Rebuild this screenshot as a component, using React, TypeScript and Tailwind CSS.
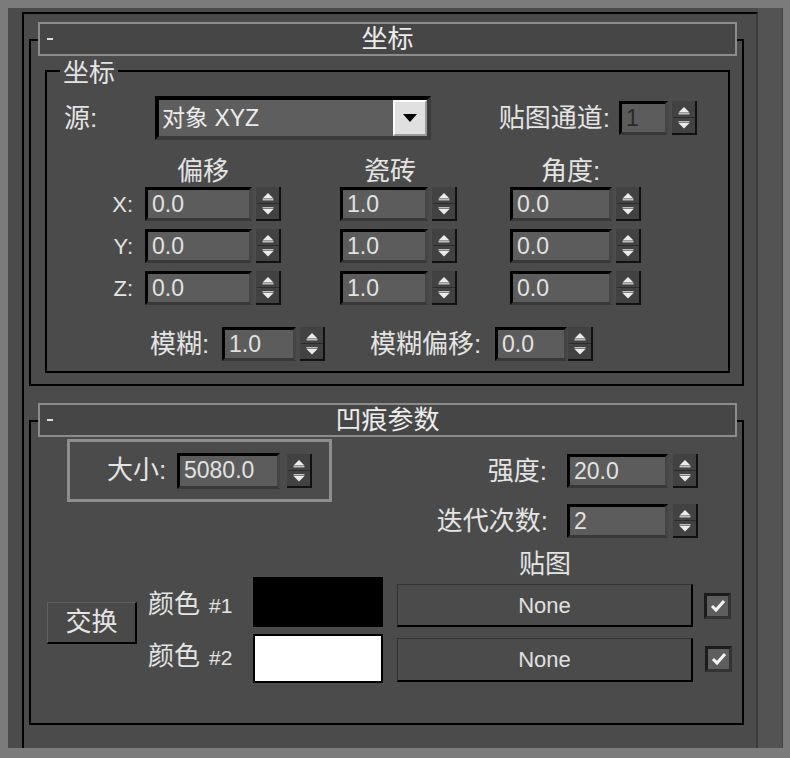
import React from "react";

// 3ds Max style rollout panel: 坐标 + 凹痕参数

const Spinner = () => (
  <svg width="25" height="34" viewBox="0 0 25 34" className="block shrink-0">
    <rect x="0" y="0" width="25" height="34" fill="#111" />
    <rect x="0" y="0" width="23" height="32" fill="#424242" />
    <line x1="1" y1="16.5" x2="23" y2="16.5" stroke="#2c2c2c" />
    <polygon points="12,6 6.5,11.5 17.5,11.5" fill="#ececec" />
    <rect x="6.5" y="12" width="11" height="1.5" fill="#bdbdbd" />
    <rect x="6.5" y="20" width="11" height="1.5" fill="#bdbdbd" />
    <polygon points="6.5,22 17.5,22 12,27.5" fill="#ececec" />
  </svg>
);

type FieldProps = {
  value: string;
  w: string;
  h?: string;
  dim?: boolean;
};

const Field = ({ value, w, h = "h-[34px]", dim = false }: FieldProps) => (
  <div
    className={`flex ${h} ${w} shrink-0 items-center border-[3px] border-t-black border-l-black border-r-[#454545] border-b-[#383838] bg-[#5c5c5c] pl-[4px] text-[23px] leading-none ${
      dim ? "text-[#2a2a2a]" : "text-[#e2e2e2]"
    }`}
  >
    {value}
  </div>
);

const SpinField = ({ value, w, dim, gap = "gap-[4px]" }: FieldProps & { gap?: string }) => (
  <div className={`flex items-center ${gap}`}>
    <Field value={value} w={w} dim={dim} />
    <Spinner />
  </div>
);

const RolloutHeader = ({ title }: { title: string }) => (
  <div className="relative z-10 ml-[9px] flex h-[34px] w-[699px] items-center border-2 border-[#8c8c8c] bg-[#464646]">
    <span className="ml-[7px] h-[2px] w-[6px] bg-[#dcdcdc]" />
    <span className="flex-1 pr-[13px] text-center text-[26px] leading-[28px] text-[#ededed]">
      {title}
    </span>
  </div>
);

const CheckBox = ({ className = "" }: { className?: string }) => (
  <div
    className={`flex h-[26px] w-[27px] items-center justify-center border-[3px] border-t-[#1c1c1c] border-l-[#1c1c1c] border-r-[#333] border-b-[#333] bg-[#5e5e5e] ${className}`}
  >
    <svg width="16" height="14" viewBox="0 0 16 14">
      <polyline points="2,7 6,11 14,2" fill="none" stroke="#f4f4f4" strokeWidth="3" />
    </svg>
  </div>
);

const MapButton = ({ className = "" }: { className?: string }) => (
  <div
    className={`flex w-[296px] items-center justify-center border border-[#333] border-r-2 border-b-2 border-r-black border-b-black bg-[#4b4b4b] text-[22px] text-[#e0e0e0] ${className}`}
  >
    None
  </div>
);

export default function App() {
  return (
    <div className="h-[758px] w-[790px] bg-[#7b7b7b] pt-[8px] pr-[7px] pb-[10px] pl-[8px] font-['Liberation_Sans','Noto_Sans_CJK_SC',sans-serif] text-[#e4e4e4]">
      <div className="flex h-full bg-[#4b4b4b]">
        <div className="h-full w-[750px] pt-[4px] pl-[14px]">
          <div className="h-full border-t-2 border-l-2 border-r-2 border-t-black border-l-black border-r-[#3b3b3b]">
            {/* rollout: 坐标 */}
            <div className="mt-[8px] ml-[5px] w-[715px]">
              <RolloutHeader title="坐标" />
              <div className="-mt-[17px] h-[347px] border-2 border-black">
                <div className="mt-[29px] mr-[12px] ml-[14px] h-[303px] border-2 border-black">
                  <div className="-mt-[13px] ml-[13px] w-fit bg-[#4b4b4b] px-[3px] text-[26px] leading-[28px]">
                    坐标
                  </div>

                  <div className="mt-[9px] flex h-[44px] items-center pl-[17px]">
                    <span className="w-[91px] text-[26px]">源:</span>
                    <div className="flex h-[44px] w-[276px] border-4 border-t-black border-l-black border-r-[#3b3b3b] border-b-[#3b3b3b] bg-[#5e5e5e]">
                      <span className="flex-1 pl-[3px] text-[23px] leading-[36px] text-[#ececec]">
                        对象 XYZ
                      </span>
                      <div className="flex h-full w-[34px] items-center justify-center border-2 border-t-white border-l-white border-r-[#999] border-b-[#999] bg-[#e0e0e0]">
                        <svg width="14" height="8" viewBox="0 0 14 8">
                          <polygon points="0,0 14,0 7,8" fill="#000" />
                        </svg>
                      </div>
                    </div>
                    <span className="w-[188px] pr-[9px] text-right text-[26px]">贴图通道:</span>
                    <SpinField value="1" w="w-[49px]" dim />
                  </div>

                  <div className="mt-[17px] flex h-[28px] text-[26px] leading-[28px]">
                    <span className="w-[98px]" />
                    <span className="w-[195px] pl-[32px]">偏移</span>
                    <span className="w-[170px] pl-[24px]">瓷砖</span>
                    <span className="pl-[31px]">角度:</span>
                  </div>

                  {["X", "Y", "Z"].map((axis, i) => (
                    <div
                      key={axis}
                      className={`flex h-[34px] items-center ${i === 0 ? "mt-[2px]" : "mt-[8px]"}`}
                    >
                      <span className="w-[86px] text-right text-[22px]">{axis}:</span>
                      <div className="ml-[12px]">
                        <SpinField value="0.0" w="w-[107px]" />
                      </div>
                      <div className="ml-[59px]">
                        <SpinField value="1.0" w="w-[88px]" />
                      </div>
                      <div className="ml-[53px]">
                        <SpinField value="0.0" w="w-[102px]" />
                      </div>
                    </div>
                  ))}

                  <div className="mt-[22px] flex h-[34px] items-center pl-[103px] text-[26px]">
                    <span className="w-[72px]">模糊:</span>
                    <SpinField value="1.0" w="w-[74px]" />
                    <span className="ml-[45px] w-[125px]">模糊偏移:</span>
                    <SpinField value="0.0" w="w-[72px]" gap="gap-[1px]" />
                  </div>
                </div>
              </div>
            </div>

            {/* rollout: 凹痕参数 */}
            <div className="mt-[17px] ml-[5px] w-[715px]">
              <RolloutHeader title="凹痕参数" />
              <div className="-mt-[17px] h-[305px] border-2 border-black">
                <div className="mt-[17px] flex items-start">
                  <div className="ml-[36px] flex h-[63px] w-[265px] items-center border-[3px] border-[#8e8e8e] pl-[37px]">
                    <span className="w-[70px] text-[26px]">大小:</span>
                    <Field value="5080.0" w="w-[103px]" h="h-[36px]" />
                    <div className="ml-[7px]">
                      <Spinner />
                    </div>
                  </div>
                  <div className="mt-[15px] flex w-[366px] flex-col items-end text-[26px]">
                    <div className="flex h-[34px] items-center">
                      <span>强度:</span>
                      <div className="ml-[20px]">
                        <SpinField value="20.0" w="w-[101px]" gap="gap-[5px]" />
                      </div>
                    </div>
                    <div className="mt-[16px] flex h-[34px] items-center">
                      <span>迭代次数:</span>
                      <div className="ml-[19px]">
                        <SpinField value="2" w="w-[101px]" gap="gap-[5px]" />
                      </div>
                    </div>
                  </div>
                </div>

                <div className="mt-[13px] ml-[366px] h-[26px] w-[296px] text-center text-[26px] leading-[26px]">
                  贴图
                </div>

                <div className="ml-[16px] flex items-start">
                  <div className="mt-[25px] flex h-[42px] w-[90px] items-center justify-center border-t border-l border-t-[#5f5f5f] border-l-[#5f5f5f] border-r-2 border-b-2 border-r-black border-b-black bg-[#494949] text-[26px]">
                    交换
                  </div>
                  <div className="ml-[11px] flex flex-col gap-[7px]">
                    <div className="flex h-[50px] items-start">
                      <span className="mt-[13px] w-[105px] text-[26px] leading-[28px]">
                        颜色<span className="ml-[9px] text-[21px]">#1</span>
                      </span>
                      <div className="h-[50px] w-[130px] bg-black" />
                      <MapButton className="mt-[7px] ml-[14px] h-[43px]" />
                      <CheckBox className="mt-[16px] ml-[11px]" />
                    </div>
                    <div className="flex h-[49px] items-start">
                      <span className="mt-[8px] w-[105px] text-[26px] leading-[28px]">
                        颜色<span className="ml-[9px] text-[21px]">#2</span>
                      </span>
                      <div className="h-[49px] w-[130px] border-2 border-black bg-white" />
                      <MapButton className="mt-[4px] ml-[14px] h-[44px]" />
                      <CheckBox className="mt-[12px] ml-[12px]" />
                    </div>
                  </div>
                </div>
              </div>
            </div>
          </div>
        </div>
        <div className="h-full flex-1 border-r border-[#444] bg-[#535353]" />
      </div>
    </div>
  );
}
